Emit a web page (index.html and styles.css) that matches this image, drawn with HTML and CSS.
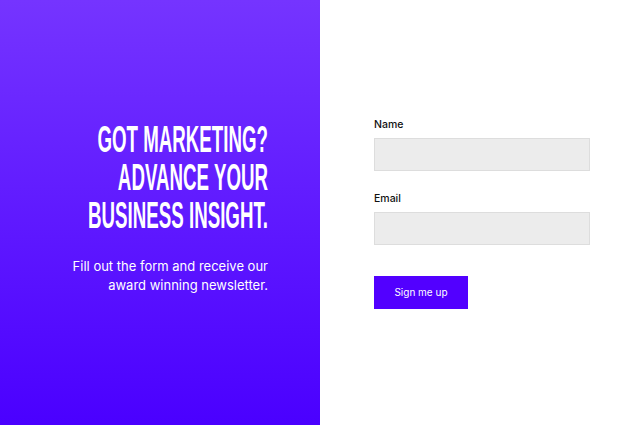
FILE: index.html
```html
<!DOCTYPE html>
<html>
<head>
<meta charset="utf-8">
<link rel="stylesheet" href="styles.css">
</head>
<body>
<div class="page">
  <section class="promo">
    <div class="promo-inner">
      <h1 class="headline">
        <span class="hl-line">Got marketing?</span>
        <span class="hl-line">Advance your</span>
        <span class="hl-line">business insight.</span>
      </h1>
      <p class="lead">Fill out the form and receive our<br>award winning newsletter.</p>
    </div>
  </section>
  <section class="signup">
    <form class="form">
      <label class="label" for="name">Name</label>
      <input class="field" id="name" type="text">
      <label class="label label-gap" for="email">Email</label>
      <input class="field" id="email" type="email">
      <button class="btn" type="button">Sign me up</button>
    </form>
  </section>
</div>
</body>
</html>
```

FILE: styles.css
```css
* { box-sizing: border-box; }
html, body { margin: 0; padding: 0; }
body { font-family: "Inter", "Noto Sans", sans-serif; background: #fff; }
.page { display: flex; width: 637px; height: 425px; }
.promo {
  width: 320px;
  flex: none;
  background: linear-gradient(180deg, #7534ff 0%, #4a00ff 100%);
  display: flex;
  align-items: center;
  justify-content: flex-end;
  padding-right: 52px;
  padding-bottom: 9px;
}
.promo-inner { text-align: right; color: #fff; width: 240px; }
.headline {
  margin: 0;
  font-family: "Liberation Sans", Arial, sans-serif;
  font-weight: 700;
  font-size: 36px;
  line-height: 38px;
  text-transform: uppercase;
}
.hl-line {
  display: flex;
  justify-content: flex-end;
  white-space: nowrap;
  transform: scaleX(0.52);
  transform-origin: right center;
}
.lead {
  margin: 22px 0 0;
  font-size: 13px;
  line-height: 19px;
  font-weight: 400;
}
.signup {
  flex: 1;
  display: flex;
  align-items: center;
  padding-left: 54px;
}
.form { width: 216px; display: flex; flex-direction: column; align-items: flex-start; }
.label { font-size: 10.5px; line-height: 15px; font-weight: 500; color: #111; margin-bottom: 6px; }
.label-gap { margin-top: 20px; }
.field {
  width: 216px;
  height: 33px;
  background: #ececec;
  border: 1px solid #dddddd;
  margin: 0;
  padding: 0 8px;
}
.btn {
  margin-top: 31px;
  width: 94px;
  height: 33px;
  background: #5200ff;
  color: #fff;
  border: 0;
  font-family: inherit;
  font-size: 10px;
  padding: 0;
}
```
